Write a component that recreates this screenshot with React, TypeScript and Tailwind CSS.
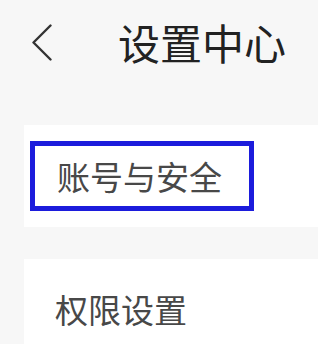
import React from 'react';

const font = { fontFamily: '"Noto Sans CJK SC", "Noto Sans", sans-serif' };

export default function App() {
  return (
    <div className="min-h-screen w-full bg-[#f7f7f7] overflow-hidden" style={font}>
      <div className="h-[84px] flex items-center">
        <div className="ml-[31px] w-[21px] flex items-center">
          <svg width="21" height="37" viewBox="0 0 21 37" fill="none">
            <polyline points="19.5,1.5 2.5,18.5 19.5,35.5" stroke="#333" strokeWidth="2.4" strokeLinecap="round" strokeLinejoin="round" />
          </svg>
        </div>
        <h1 className="ml-[66px] text-[42px] leading-none text-[#222] font-normal">设置中心</h1>
      </div>

      <div className="mt-[41px] ml-[24px] h-[102px] bg-white flex items-center">
        <div className="ml-[6px] w-[224px] h-[70px] border-[5px] border-[#1c1cdc] flex items-center pl-[22px]">
          <span className="text-[33px] leading-none text-[#484848]">账号与安全</span>
        </div>
      </div>

      <div className="mt-[32px] ml-[24px] h-[100px] bg-white flex items-center pl-[31px]">
        <span className="text-[33px] leading-none text-[#484848]">权限设置</span>
      </div>
    </div>
  );
}
